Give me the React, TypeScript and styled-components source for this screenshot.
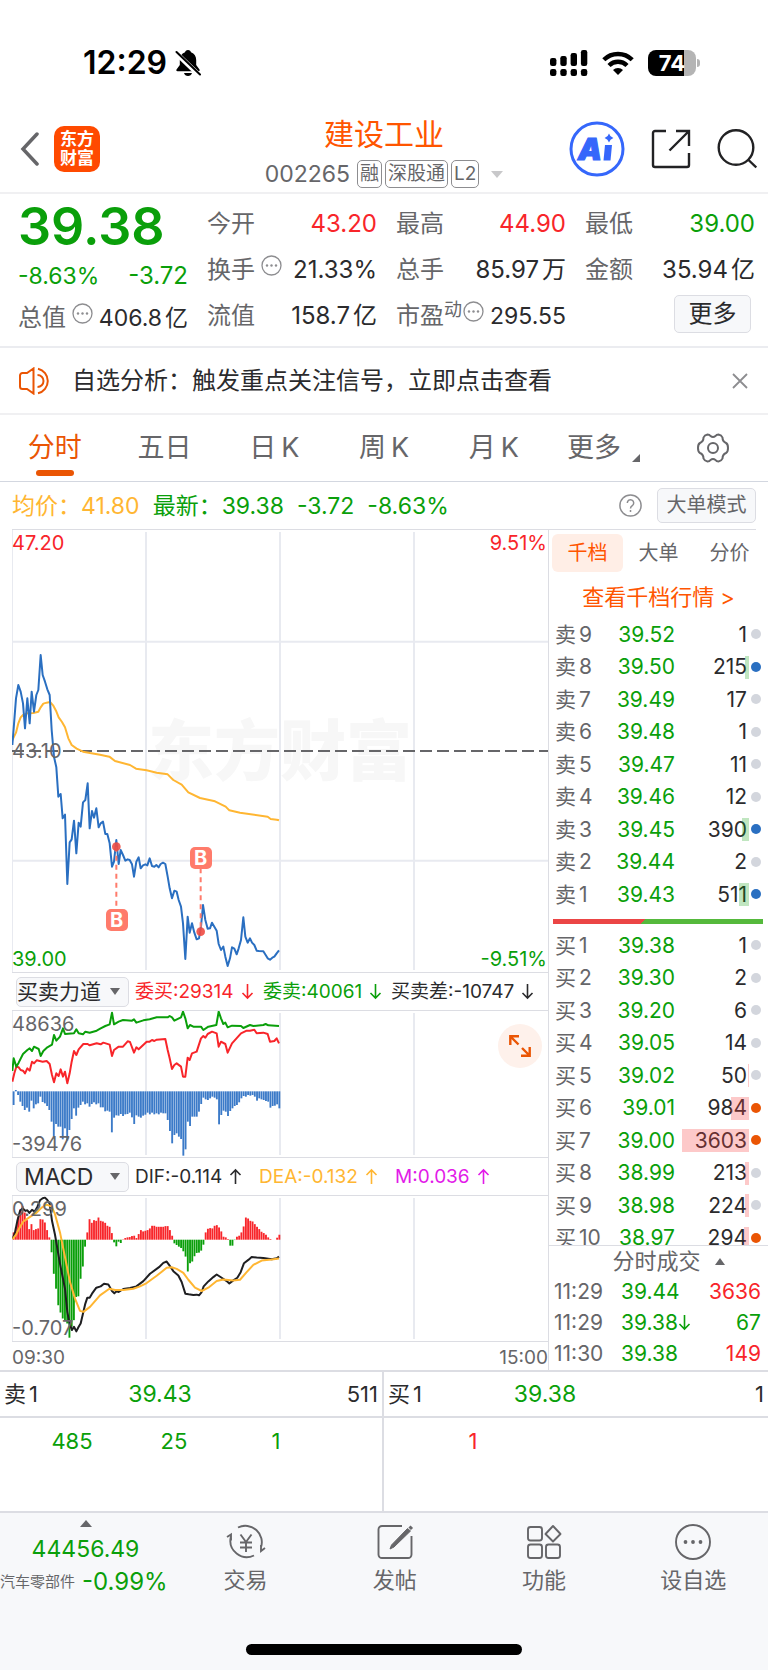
import React from "react";
import styled, { createGlobalStyle, css } from "styled-components";

const C = {
  green: "#0a9f0a",
  red: "#f8252a",
  orange: "#ff5500",
  tab: "#ea5504",
  amber: "#ffb632",
  magenta: "#e21be8",
  blue: "#2a6fc1",
  text: "#2b2b2d",
  grey: "#666669",
  line: "#dcdde3",
  grid: "#e8eaf0",
  soft: "#f7f8fa",
};

const GlobalStyle = createGlobalStyle`
  * { box-sizing: border-box; }
  body {
    margin: 0;
    background: #fff;
    color: ${C.text};
    font-family: Inter, "Noto Sans CJK SC", sans-serif;
    font-size: 22px;
    line-height: 32px;
  }
  button, select { font: inherit; color: inherit; margin: 0; padding: 0; border: 0; background: none; white-space: nowrap; }
  a { color: inherit; text-decoration: none; }
  svg { display: block; flex: none; }
`;

const Page = styled.main`
  min-height: 100vh;
  background: #fff;
  overflow-x: hidden;
`;

/* ---------- status bar ---------- */

const StatusBar = styled.div`
  display: flex;
  justify-content: space-between;
  align-items: center;
  padding: 19px 68px 0 83px;
  height: 106px;
  color: #000;
`;
const StatusSide = styled.div`
  display: flex;
  align-items: center;
  gap: 14px;
`;
const Clock = styled.div`
  display: flex;
  align-items: center;
  gap: 8px;
  font-size: 32px;
  font-weight: 600;
`;
const Battery = styled.span`
  display: flex;
  align-items: center;
  gap: 1px;
  &::after {
    content: "";
    width: 3px;
    height: 8px;
    border-radius: 0 3px 3px 0;
    background: #b4b4b4;
  }
`;
const BatteryBody = styled.span`
  width: 48px;
  height: 26px;
  line-height: 26px;
  border-radius: 8px;
  background: linear-gradient(90deg, #000 75%, #b4b4b4 75%);
  color: #fff;
  font-size: 22px;
  font-weight: 700;
  text-align: center;
`;

/* ---------- header ---------- */

const Header = styled.header`
  display: grid;
  grid-template-columns: 1fr auto 1fr;
  align-items: center;
  height: 88px;
  padding: 0 11px;
  border-bottom: 2px solid #f0f0f2;
`;
const HeaderSide = styled.div<{ $end?: boolean }>`
  display: flex;
  align-items: center;
  gap: ${(p) => (p.$end ? 26 : 15)}px;
  padding-left: ${(p) => (p.$end ? 0 : 9)}px;
  justify-content: ${(p) => (p.$end ? "flex-end" : "flex-start")};
`;
const Logo = styled.span`
  display: flex;
  align-items: center;
  justify-content: center;
  width: 46px;
  height: 46px;
  border-radius: 10px;
  background: #ff4a00;
  color: #fff;
  font-size: 17px;
  line-height: 19px;
  font-weight: 700;
  text-align: center;
`;
const TitleBlock = styled.div`
  display: flex;
  flex-direction: column;
  align-items: center;
  gap: 6px;
  padding-top: 4px;
`;
const Title = styled.h1`
  margin: 0;
  color: ${C.orange};
  font-size: 30px;
  line-height: 40px;
  font-weight: 400;
`;
const CodeRow = styled.div`
  display: flex;
  align-items: center;
  gap: 3px;
  color: ${C.grey};
  font-size: 23px;
  line-height: 28px;
`;
const Code = styled.span`
  margin-right: 4px;
`;
const Tag = styled.span`
  padding: 0 2px;
  border: 1px solid #8d8d90;
  border-radius: 5px;
  font-size: 19px;
  line-height: 26px;
`;
const Caret = styled.span<{ $up?: boolean; $light?: boolean; $small?: boolean }>`
  width: 0;
  height: 0;
  border: ${(p) => (p.$small ? 5 : 6)}px solid transparent;
  ${(p) =>
    p.$up
      ? css`border-top: 0; border-bottom: 7px solid ${C.grey};`
      : css`border-bottom: 0; border-top: 7px solid ${p.$light ? "#c8c8ca" : C.grey};`}
`;
const CodeCaret = styled(Caret)`
  margin-left: 9px;
`;

/* ---------- quote summary ---------- */

const Summary = styled.section`
  display: grid;
  grid-template-columns: repeat(4, 1fr);
  column-gap: 19px;
  padding: 7px 13px 7px 18px;
  border-bottom: 2px solid #ebecf0;
  font-size: 24px;
`;
const SummaryColumn = styled.dl`
  margin: 0;
`;
const Stat = styled.div<{ $height?: number }>`
  display: flex;
  align-items: center;
  justify-content: space-between;
  height: ${(p) => p.$height ?? 46}px;
  white-space: nowrap;
`;
const StatLabel = styled.dt`
  display: flex;
  align-items: center;
  gap: 6px;
  color: ${C.grey};
  svg { margin-bottom: 10px; }
`;
const StatValue = styled.dd<{ $color?: string; $compact?: boolean }>`
  display: flex;
  gap: 3px;
  margin: 0;
  color: ${(p) => p.$color ?? C.text};
  font-size: ${(p) => (p.$compact ? 23 : 24)}px;
`;
const Price = styled.dd`
  margin: 0;
  height: 54px;
  color: ${C.green};
  font-size: 52px;
  line-height: 52px;
  font-weight: 600;
`;
const Sup = styled.sup`
  margin: 0 -5px 12px -6px;
  font-size: 18px;
  line-height: 20px;
  vertical-align: baseline;
`;
const OutlineButton = styled.button<{ $w: number; $h: number; $size: number }>`
  width: ${(p) => p.$w}px;
  height: ${(p) => p.$h}px;
  border: 1px solid ${C.line};
  border-radius: 5px;
  background: ${C.soft};
  font-size: ${(p) => p.$size}px;
  line-height: ${(p) => p.$h - 2}px;
`;
const MoreCell = styled.div`
  display: flex;
  justify-content: flex-end;
  padding: 2px 4px 0 0;
`;

/* ---------- banner and period tabs ---------- */

const Banner = styled.section`
  display: flex;
  align-items: center;
  gap: 20px;
  height: 67px;
  padding: 0 20px 0 18px;
  border-bottom: 2px solid #f0f0f2;
  font-size: 24px;
`;
const BannerText = styled.a`
  flex: 1;
  white-space: nowrap;
`;
const PeriodTabs = styled.nav`
  display: grid;
  grid-template-columns: repeat(7, 1fr);
  height: 67px;
  border-bottom: 1px solid #d3d7e0;
`;
const PeriodTab = styled.button<{ $active?: boolean }>`
  display: flex;
  align-items: center;
  justify-content: center;
  gap: 5px;
  color: ${(p) => (p.$active ? C.tab : C.grey)};
  font-size: 27px;
  position: relative;
  ${(p) =>
    p.$active &&
    css`
      &::after {
        content: "";
        position: absolute;
        left: calc(50% - 19px);
        bottom: 5px;
        width: 38px;
        height: 6px;
        border-radius: 3px;
        background: ${C.tab};
      }
    `}
`;
const Corner = styled.span`
  align-self: flex-end;
  margin: 0 0 19px 6px;
  border-left: 8px solid transparent;
  border-bottom: 8px solid ${C.grey};
`;

/* ---------- legend ---------- */

const Legend = styled.div`
  display: flex;
  align-items: center;
  gap: 13px;
  height: 48px;
  margin: 0 12px;
  border-bottom: 1px solid ${C.line};
  white-space: nowrap;
`;
const LegendItem = styled.span<{ $color: string }>`
  color: ${(p) => p.$color};
  font-size: 23px;
`;
const LegendTools = styled.div`
  display: flex;
  align-items: center;
  gap: 15px;
  margin-left: auto;
  color: ${C.grey};
`;

/* ---------- charts ---------- */

const Board = styled.div`
  display: flex;
  border-bottom: 2px solid ${C.line};
`;
const Charts = styled.section`
  flex: 1;
  min-width: 0;
  margin-left: 12px;
`;
const ChartBox = styled.div<{ $h: number }>`
  position: relative;
  height: ${(p) => p.$h}px;
  box-shadow: inset 1px 0 ${C.grid};
  border-bottom: 1px solid ${C.line};
`;
const Plot = styled.svg`
  width: 100%;
  height: 100%;
  position: relative;
`;
const AxisLabel = styled.span<{ $color: string; $right?: boolean; $edge: "top" | "middle" | "bottom" }>`
  position: absolute;
  ${(p) => (p.$right ? "right: 1px;" : "left: 0;")}
  ${(p) => (p.$edge === "top" ? "top: 0;" : p.$edge === "bottom" ? "bottom: 0;" : "top: calc(50% - 13px);")}
  color: ${(p) => p.$color};
  font-size: 20px;
  line-height: 26px;
`;
const Watermark = styled.span`
  position: absolute;
  inset: 0;
  display: flex;
  align-items: center;
  justify-content: center;
  color: #f7f7f7;
  font-size: 66px;
  font-weight: 900;
`;
const Marker = styled.span<{ $x: number; $y: number }>`
  position: absolute;
  left: ${(p) => p.$x}%;
  top: ${(p) => p.$y}%;
  transform: translate(-50%, -50%);
  width: 22px;
  height: 22px;
  border-radius: 5px;
  background: #ff7b6b;
  color: #fff;
  font-size: 20px;
  line-height: 22px;
  font-weight: 700;
  text-align: center;
`;
const IndicatorRow = styled.div`
  display: flex;
  align-items: center;
  gap: 6px;
  height: 38px;
  padding-left: 4px;
  border-bottom: 1px solid ${C.line};
  white-space: nowrap;
  font-size: 19px;
`;
const SelectWrap = styled.span`
  position: relative;
  display: flex;
  align-items: center;
  width: 113px;
`;
const Select = styled.select<{ $indent: number; $size: number }>`
  appearance: none;
  width: 100%;
  height: 30px;
  padding-left: ${(p) => p.$indent}px;
  border: 1px solid ${C.line};
  border-radius: 5px;
  background: ${C.soft};
  font-size: ${(p) => p.$size}px;
  line-height: 28px;
`;
const SelectCaret = styled(Caret)`
  position: absolute;
  right: 9px;
  pointer-events: none;
`;
const Reading = styled.span<{ $color: string; $w?: number }>`
  display: flex;
  align-items: center;
  gap: 7px;
  min-width: ${(p) => p.$w ?? 0}px;
  color: ${(p) => p.$color};
`;
const ExpandButton = styled.button`
  position: absolute;
  right: 6px;
  top: 13px;
  display: flex;
  align-items: center;
  justify-content: center;
  width: 44px;
  height: 44px;
  border-radius: 50%;
  background: #fef1eb;
`;
const TimeAxis = styled.div`
  display: flex;
  justify-content: space-between;
  height: 28px;
  color: ${C.grey};
  font-size: 19px;
  line-height: 31px;
`;

/* ---------- order book ---------- */

const BookPanel = styled.aside`
  display: flex;
  flex-direction: column;
  width: 220px;
  border-left: 1px solid ${C.line};
`;
const BookTabs = styled.div`
  display: flex;
  padding: 4px 0 0 3px;
`;
const BookTab = styled.button<{ $active?: boolean }>`
  width: 71px;
  height: 38px;
  border-radius: 6px;
  color: ${(p) => (p.$active ? C.orange : C.grey)};
  background: ${(p) => (p.$active ? "#ffeee6" : "transparent")};
  font-size: 20px;
`;
const BookLink = styled.a`
  margin-top: 4px;
  height: 42px;
  color: ${C.orange};
  line-height: 42px;
  text-align: center;
`;
const BookTable = styled.table`
  width: 100%;
  table-layout: fixed;
  border-collapse: collapse;
  font-size: 21px;
  td, th { padding: 0; font-weight: 400; white-space: nowrap; }
`;
const BookRow = styled.tr`
  height: 32px;
  line-height: 32px;
  &:nth-child(odd) { height: 33px; }
`;
const LevelCell = styled.th`
  width: 50px;
  color: ${C.grey};
  text-align: left;
  && { padding-left: 6px; }
`;
const Rank = styled.span`
  margin-left: 3px;
`;
const PriceCell = styled.td`
  width: 76px;
  color: ${C.green};
  text-align: right;
`;
const VolumeCell = styled.td`
  position: relative;
  text-align: right;
  && { padding-right: 21px; }
`;
const VolumeBar = styled.span<{ $buy?: boolean }>`
  position: absolute;
  right: 19px;
  top: 5px;
  height: 23px;
  background: ${(p) => (p.$buy ? "rgba(248, 60, 60, .28)" : "rgba(10, 160, 10, .26)")};
`;
const Dot = styled.span<{ $color: string }>`
  position: absolute;
  right: 7px;
  top: 11px;
  width: 10px;
  height: 10px;
  border-radius: 50%;
  background: ${(p) => p.$color};
`;
const Ratio = styled.div`
  height: 5px;
  margin: 8px 5px 5px 4px;
  background: linear-gradient(135deg, #eb4545 0 43%, #55b93c 43%);
`;
const BuyClip = styled.div`
  height: 316px;
  overflow: hidden;
`;
const TradesHead = styled.button`
  display: flex;
  align-items: center;
  justify-content: center;
  gap: 14px;
  width: 100%;
  height: 31px;
  padding-left: 20px;
  border-top: 1px solid ${C.line};
  color: ${C.grey};
  line-height: 28px;
`;
const TradeRow = styled.tr`
  height: 31px;
  line-height: 31px;
`;
const TradeTime = styled.td`
  width: 66px;
  color: ${C.grey};
  && { padding-left: 5px; }
`;
const TradePrice = styled.td`
  width: 76px;
  color: ${C.green};
  && { padding-left: 6px; }
`;
const TradeVolume = styled.td<{ $color: string }>`
  color: ${(p) => p.$color};
  text-align: right;
  && { padding-right: 7px; }
`;
const Arrow = styled.svg`
  display: inline-block;
  vertical-align: -1px;
`;

/* ---------- best quotes ---------- */

const Quotes = styled.section`
  display: grid;
  grid-template-columns: 1fr 1fr;
`;
const QuoteSide = styled.div`
  &:first-child { border-right: 2px solid ${C.line}; }
`;
const QuoteHead = styled.div`
  display: grid;
  grid-template-columns: 1fr auto 1fr;
  align-items: center;
  height: 46px;
  padding: 0 4px;
  border-bottom: 2px solid ${C.line};
`;
const QuotePrice = styled.span`
  margin-right: 62px;
  color: ${C.green};
  font-size: 23px;
`;
const QuoteVolume = styled.span`
  text-align: right;
`;
const QuoteLots = styled.div<{ $indent: number; $color: string }>`
  display: flex;
  height: 93px;
  padding: 7px 0 0 ${(p) => p.$indent}px;
  color: ${(p) => p.$color};
  text-align: center;
`;
const Lot = styled.span`
  width: 102px;
`;

/* ---------- bottom bar ---------- */

const BottomBar = styled.footer`
  display: flex;
  flex-direction: column;
  justify-content: space-between;
  align-items: center;
  height: 160px;
  padding-bottom: 16px;
  border-top: 2px solid ${C.line};
  background: ${C.soft};
`;
const BottomNav = styled.nav`
  display: flex;
  width: 100%;
`;
const IndexCell = styled.a`
  display: flex;
  flex-direction: column;
  align-items: center;
  width: 171px;
  padding-top: 7px;
  color: ${C.green};
  font-size: 23px;
  white-space: nowrap;
`;
const IndexValue = styled.span`
  margin-top: 5px;
  line-height: 34px;
`;
const IndexName = styled.span`
  display: flex;
  align-items: center;
  gap: 7px;
  align-self: flex-start;
  font-size: 24px;
`;
const IndexLabel = styled.span`
  color: ${C.grey};
  font-size: 15px;
`;
const NavButton = styled.button`
  display: flex;
  flex: 1;
  flex-direction: column;
  align-items: center;
  gap: 3px;
  padding-top: 11px;
  color: ${C.grey};
`;
const HomeIndicator = styled.span`
  width: 276px;
  height: 11px;
  border-radius: 6px;
  background: #000;
`;

/* ---------- data ---------- */

const PRICE_LINE =
  "37,315 43,240 48,175 55,135 62,155 69,190 75,265 82,175 89,250 95,155 102,215 109,165 115,150 122,45 128,105 135,125 142,148 149,165 155,270 162,350 169,382 175,470 182,462 188,535 195,524 202,732 209,607 215,598 222,542 229,640 236,548 242,560 249,487 256,480 263,430 269,565 276,513 282,533 289,505 296,562 302,550 309,545 316,582 322,582 329,610 336,680 342,665 349,600 356,672 362,630 369,645 376,662 383,658 389,660 396,673 402,710 409,665 416,652 422,685 429,676 436,673 442,676 449,655 456,678 463,680 469,675 476,682 482,672 489,668 496,672 503,710 509,745 516,775 523,752 530,755 536,780 543,800 549,850 556,957 563,830 569,878 576,850 583,878 590,898 597,895 603,860 609,795 616,840 623,866 630,865 636,848 643,860 650,872 656,912 663,930 670,920 676,950 683,978 690,955 696,922 703,926 710,943 716,925 723,900 730,832 736,890 743,908 750,895 756,908 763,915 770,932 777,933 790,934 797,945 803,955 810,959 817,953 823,950 830,940 837,931";
const AVERAGE_LINE =
  "37,300 48,278 55,250 62,232 69,225 82,220 100,219 115,215 122,202 130,191 140,188 150,186 160,197 168,212 176,232 186,246 195,262 205,295 215,315 230,326 249,335 270,339 300,344 328,350 345,363 390,375 408,386 440,391 470,398 503,403 520,420 545,434 565,457 600,474 645,484 677,500 688,511 720,518 803,530 812,537 830,539 837,541";
const SELL_LINE =
  "37,303 41,265 49,290 56,278 69,252 82,240 89,235 96,243 102,230 116,237 122,258 130,243 142,232 156,224 162,195 169,212 180,200 189,175 195,192 222,190 229,178 236,190 249,193 256,185 269,188 290,182 302,175 316,168 329,163 336,128 342,163 356,155 369,150 396,152 402,148 409,158 430,151 449,148 470,142 503,142 509,138 516,142 523,152 543,142 549,125 556,145 563,175 570,165 580,170 603,170 610,180 625,170 649,165 656,125 663,145 670,162 676,158 683,172 696,167 723,168 730,174 750,165 760,168 790,165 797,162 805,166 837,168";
const BUY_LINE =
  "37,335 43,310 49,290 56,292 62,300 69,302 75,310 82,295 89,302 96,275 102,280 110,271 128,275 140,273 149,282 156,315 162,337 169,310 176,318 182,298 189,320 195,305 202,340 209,310 215,275 222,243 229,255 236,238 250,222 263,222 269,226 290,220 302,223 310,218 329,224 336,258 342,240 356,230 369,230 383,214 390,216 402,248 409,232 416,238 440,215 449,215 456,210 463,213 470,209 496,207 503,240 509,265 516,297 523,285 530,280 543,290 549,320 556,320 563,263 569,270 576,250 590,245 603,205 610,198 616,203 623,192 636,185 650,190 656,230 663,215 676,222 683,248 696,220 723,190 740,182 750,182 763,179 770,190 790,188 803,192 810,215 823,213 830,205 837,220";
const FORCE_BARS = [
  405, 360, 375, 395, 408, 420, 413, 425, 392, 415, 403, 400, 380, 396, 400, 408, 420, 455, 500, 462, 470, 470, 508, 475, 512, 480, 447, 415, 437, 413,
  405, 395, 403, 400, 410, 402, 397, 403, 400, 412, 412, 424, 422, 425, 487, 443, 436, 437, 432, 438, 433, 432, 428, 442, 462, 436, 440, 443, 437, 434,
  428, 433, 428, 433, 430, 433, 428, 430, 430, 450, 483, 520, 495, 490, 500, 507, 557, 538, 455, 468, 440, 440, 440, 425, 402, 383, 388, 390, 385, 380,
  383, 388, 463, 435, 422, 425, 438, 423, 415, 408, 405, 397, 385, 378, 380, 375, 377, 375, 380, 392, 385, 388, 390, 393, 395, 413, 408, 407, 403, 415,
];
const MACD_BARS = [
  215, 200, 170, 145, 135, 155, 178, 205, 190, 208, 205, 203, 175, 176, 185, 208, 230, 275, 340, 385, 435, 457, 475, 480, 490, 533, 500, 480, 410, 408,
  355, 318, 258, 215, 175, 186, 178, 180, 170, 180, 182, 186, 195, 198, 217, 245, 257, 243, 247, 236, 232, 230, 229, 226, 225, 232, 220, 208, 212, 210,
  208, 203, 195, 195, 198, 198, 198, 198, 196, 196, 208, 225, 248, 253, 258, 262, 272, 288, 333, 308, 303, 287, 277, 276, 270, 252, 215, 204, 202, 203,
  195, 193, 200, 212, 228, 230, 235, 255, 255, 238, 228, 225, 215, 197, 170, 173, 180, 182, 190, 198, 205, 213, 217, 222, 230, 235, 237, 237, 231, 222,
];
const DIF_LINE =
  "38,235 45,215 52,180 60,150 68,142 76,150 82,148 88,156 96,147 104,152 112,138 120,118 128,112 135,110 142,117 149,128 156,180 165,222 180,310 195,385 202,455 209,492 216,510 222,500 229,514 236,500 242,490 249,460 256,430 262,412 269,412 276,400 289,382 302,378 312,370 325,372 336,392 343,399 350,393 356,395 370,386 390,383 409,378 430,362 450,340 477,320 490,307 500,303 510,317 520,332 535,345 545,365 556,400 566,402 580,404 590,403 597,405 605,395 611,378 625,363 640,350 650,342 665,352 680,362 688,369 700,360 712,352 722,335 732,308 745,298 755,289 770,291 790,292 815,296 830,293 837,288";
const DEA_LINE =
  "38,235 48,222 58,202 70,182 90,168 110,155 125,140 140,131 155,137 165,160 180,215 195,290 210,365 225,415 240,452 250,455 270,440 300,405 328,385 345,389 370,389 400,385 420,378 440,368 470,346 500,322 515,320 530,325 550,337 565,358 585,382 605,392 625,382 650,362 670,357 700,360 720,358 740,335 760,313 785,300 815,297 837,294";

const DOT = { none: "#d3d6dd", sell: C.blue, buy: C.tab };
type Level = [name: string, price: string, volume: number, dot: keyof typeof DOT];
const SELLS: Level[] = [
  ["卖9", "39.52", 1, "none"],
  ["卖8", "39.50", 215, "sell"],
  ["卖7", "39.49", 17, "none"],
  ["卖6", "39.48", 1, "none"],
  ["卖5", "39.47", 11, "none"],
  ["卖4", "39.46", 12, "none"],
  ["卖3", "39.45", 390, "sell"],
  ["卖2", "39.44", 2, "none"],
  ["卖1", "39.43", 511, "sell"],
];
const BUYS: Level[] = [
  ["买1", "39.38", 1, "none"],
  ["买2", "39.30", 2, "none"],
  ["买3", "39.20", 6, "none"],
  ["买4", "39.05", 14, "none"],
  ["买5", "39.02", 50, "none"],
  ["买6", "39.01", 984, "buy"],
  ["买7", "39.00", 3603, "buy"],
  ["买8", "38.99", 213, "none"],
  ["买9", "38.98", 224, "none"],
  ["买10", "38.97", 294, "buy"],
];

/* ---------- pieces ---------- */

const Grid = ({ top, height }: { top: number; height: number }) => (
  <g stroke={C.grid} strokeWidth="2">
    {[438, 840, 1242].map((x) => (
      <line key={x} x1={x} x2={x} y1={top + 6} y2={top + height - 6} vectorEffect="non-scaling-stroke" />
    ))}
  </g>
);

const Line = ({ points, color }: { points: string; color: string }) => (
  <polyline points={points} fill="none" stroke={color} strokeWidth="2" strokeLinejoin="round" vectorEffect="non-scaling-stroke" />
);

const MoreDots = () => (
  <svg width="21" height="21" viewBox="0 0 21 21" fill="#8d8d90">
    <circle cx="10.5" cy="10.5" r="9.5" fill="none" stroke="#8d8d90" strokeWidth="1.3" />
    <circle cx="6" cy="10.5" r="1.2" />
    <circle cx="10.5" cy="10.5" r="1.2" />
    <circle cx="15" cy="10.5" r="1.2" />
  </svg>
);

const Trend = ({ up }: { up?: boolean }) => (
  <Arrow width="13" height="17" viewBox="0 0 13 17" fill="none" stroke="currentColor" strokeWidth="1.6">
    <path d={up ? "M6.500 16V2M1.500 7l5-5 5 5" : "M6.500 1v14M1.500 10l5 5 5-5"} />
  </Arrow>
);

const Amount = ({ value, unit, compact }: { value: string; unit: string; compact?: boolean }) => (
  <StatValue $compact={compact}>
    <span>{value}</span>
    <span>{unit}</span>
  </StatValue>
);

const BookRows = ({ levels, buy }: { levels: Level[]; buy?: boolean }) => (
  <BookTable>
    <tbody>
      {levels.map(([name, price, volume, dot]) => (
        <BookRow key={name}>
          <LevelCell scope="row">
            {name.slice(0, 1)}
            <Rank>{name.slice(1)}</Rank>
          </LevelCell>
          <PriceCell>{price}</PriceCell>
          <VolumeCell>
            {volume}
            <VolumeBar $buy={buy} style={{ width: Math.round((volume / 3603) * 67) }} />
            <Dot $color={DOT[dot]} />
          </VolumeCell>
        </BookRow>
      ))}
    </tbody>
  </BookTable>
);

const BookSection = () => (
  <BookPanel>
    <BookTabs>
      <BookTab $active>千档</BookTab>
      <BookTab>大单</BookTab>
      <BookTab>分价</BookTab>
    </BookTabs>
    <BookLink href="#depth">查看千档行情 &gt;</BookLink>
    <BookRows levels={SELLS} />
    <Ratio />
    <BuyClip>
      <BookRows levels={BUYS} buy />
    </BuyClip>
    <TradesHead>
      分时成交
      <Caret $up $small />
    </TradesHead>
    <BookTable>
      <tbody>
        <TradeRow>
          <TradeTime>11:29</TradeTime>
          <TradePrice>39.44</TradePrice>
          <TradeVolume $color={C.red}>3636</TradeVolume>
        </TradeRow>
        <TradeRow>
          <TradeTime>11:29</TradeTime>
          <TradePrice>
            39.38
            <Trend />
          </TradePrice>
          <TradeVolume $color={C.green}>67</TradeVolume>
        </TradeRow>
        <TradeRow>
          <TradeTime>11:30</TradeTime>
          <TradePrice>39.38</TradePrice>
          <TradeVolume $color={C.red}>149</TradeVolume>
        </TradeRow>
      </tbody>
    </BookTable>
  </BookPanel>
);

const ChartSection = () => (
  <Charts>
    <ChartBox $h={443}>
      <Watermark>东方财富</Watermark>
      <Plot viewBox="36 -330 1608 1326" preserveAspectRatio="none">
        <Grid top={-330} height={1326} />
        <g stroke={C.grid} strokeWidth="2">
          <line x1="36" x2="1644" y1="5" y2="5" vectorEffect="non-scaling-stroke" />
          <line x1="36" x2="1644" y1="662" y2="662" vectorEffect="non-scaling-stroke" />
        </g>
        <line x1="36" x2="1644" y1="333" y2="333" stroke={C.grey} strokeWidth="2" strokeDasharray="12 5" vectorEffect="non-scaling-stroke" />
        <Line points={AVERAGE_LINE} color={C.amber} />
        <Line points={PRICE_LINE} color={C.blue} />
        <g stroke="#ff7b6b" strokeWidth="2" strokeDasharray="5 4">
          <line x1="349" x2="349" y1="620" y2="808" vectorEffect="non-scaling-stroke" />
          <line x1="602" x2="602" y1="685" y2="875" vectorEffect="non-scaling-stroke" />
        </g>
        <g fill="#ee4b42" fillOpacity=".9">
          <circle cx="349" cy="620" r="13" />
          <circle cx="602" cy="875" r="13" />
        </g>
      </Plot>
      <Marker $x={19.5} $y={88.2}>B</Marker>
      <Marker $x={35.2} $y={74.2}>B</Marker>
      <AxisLabel $color={C.red} $edge="top">47.20</AxisLabel>
      <AxisLabel $color={C.red} $edge="top" $right>9.51%</AxisLabel>
      <AxisLabel $color={C.grey} $edge="middle">43.10</AxisLabel>
      <AxisLabel $color={C.green} $edge="bottom">39.00</AxisLabel>
      <AxisLabel $color={C.green} $edge="bottom" $right>-9.51%</AxisLabel>
    </ChartBox>

    <IndicatorRow>
      <SelectWrap>
        <Select $indent={0} $size={21} aria-label="副图指标一" defaultValue="买卖力道">
          <option>买卖力道</option>
        </Select>
        <SelectCaret $small />
      </SelectWrap>
      <Reading $color={C.red} $w={122}>委买:29314 <Trend /></Reading>
      <Reading $color={C.green} $w={122}>委卖:40061 <Trend /></Reading>
      <Reading $color={C.text}>买卖差:-10747 <Trend /></Reading>
    </IndicatorRow>
    <ChartBox $h={147}>
      <Plot viewBox="36 123 1608 438" preserveAspectRatio="none">
        <Grid top={123} height={438} />
        <g fill="#3b7ac8">
          {FORCE_BARS.map((y, i) => (
            <rect key={i} x={38 + i * 6.7} y={Math.min(364, y)} width="5.6" height={Math.abs(y - 364)} />
          ))}
        </g>
        <Line points={BUY_LINE} color={C.red} />
        <Line points={SELL_LINE} color={C.green} />
      </Plot>
      <AxisLabel $color={C.grey} $edge="top">48636</AxisLabel>
      <AxisLabel $color={C.grey} $edge="bottom">-39476</AxisLabel>
      <ExpandButton aria-label="全屏">
        <svg width="24" height="24" viewBox="0 0 24 24" fill="none" stroke={C.tab} strokeWidth="2.4">
          <path d="M2.300 11V2.300H11M2.500 2.500l8 8M21.700 13v8.700H13M21.500 21.500l-7.500-7.500" />
        </svg>
      </ExpandButton>
    </ChartBox>

    <IndicatorRow>
      <SelectWrap>
        <Select $indent={7} $size={23} aria-label="副图指标二" defaultValue="MACD">
          <option>MACD</option>
        </Select>
        <SelectCaret $small />
      </SelectWrap>
      <Reading $color={C.text} $w={118}>DIF:-0.114 <Trend up /></Reading>
      <Reading $color={C.amber} $w={130}>DEA:-0.132 <Trend up /></Reading>
      <Reading $color={C.magenta}>M:0.036 <Trend up /></Reading>
    </IndicatorRow>
    <ChartBox $h={146}>
      <Plot viewBox="36 105 1608 438" preserveAspectRatio="none">
        <Grid top={105} height={438} />
        {MACD_BARS.map((y, i) => (
          <rect key={i} x={38 + i * 6.7} y={Math.min(237, y)} width="5.6" height={Math.abs(y - 237)} fill={y < 237 ? C.red : C.green} />
        ))}
        <Line points={DIF_LINE} color="#1f1f21" />
        <Line points={DEA_LINE} color={C.amber} />
      </Plot>
      <AxisLabel $color={C.grey} $edge="top">0.299</AxisLabel>
      <AxisLabel $color={C.grey} $edge="bottom">-0.707</AxisLabel>
    </ChartBox>
    <TimeAxis>
      <span>09:30</span>
      <span>15:00</span>
    </TimeAxis>
  </Charts>
);

const NAV = [
  {
    label: "交易",
    icon: (
      <>
        <path d="M12 3.500A16.500 16.500 0 0 1 34.800 24M28 31.500A16.500 16.500 0 0 1 4.800 13M1 13l4-2.500v6M39 24l-4 3v-6" />
        <path d="M14.500 10.500l5.500 7.500 5.500-7.500M20 18v10M14 18.500h12M14 23.500h12" />
      </>
    ),
  },
  {
    label: "发帖",
    icon: (
      <>
        <path d="M27 2H7a3.500 3.500 0 0 0-3.500 3.500v25A3.500 3.500 0 0 0 7 34h26a3.500 3.500 0 0 0 3.500-3.500V12" />
        <path d="M32.500 4.500l3 2.500L19 23l-4 2 1.500-4z" fill="currentColor" strokeWidth="1" />
        <path d="M34.500 2.500l2.500 2.500" strokeWidth="3" />
      </>
    ),
  },
  {
    label: "功能",
    icon: (
      <>
        <rect x="4" y="3" width="14" height="13.500" rx="2.500" />
        <rect x="4" y="20.500" width="14" height="13.500" rx="2.500" />
        <rect x="22" y="20.500" width="14" height="13.500" rx="2.500" />
        <path d="M29 2l7.500 8-7.500 7.500L21.500 10z" strokeLinejoin="round" />
      </>
    ),
  },
  {
    label: "设自选",
    icon: (
      <>
        <circle cx="20" cy="18" r="17" />
        <g fill="currentColor" stroke="none">
          <circle cx="12.500" cy="18" r="1.900" />
          <circle cx="20" cy="18" r="1.900" />
          <circle cx="27.500" cy="18" r="1.900" />
        </g>
      </>
    ),
  },
];

export default function App() {
  return (
    <Page>
      <GlobalStyle />
      <StatusBar>
        <Clock>
          12:29
          <svg width="26" height="28" viewBox="0 0 26 28">
            <path d="M13 1c-1.700 0-2.800 1-3 2.300C6.500 4.600 4.800 7.500 4.800 11v5L1.500 20.500c-.5 1 0 1.700 1 1.700h21c1 0 1.500-.7 1-1.700L21.200 16v-5c0-3.500-1.700-6.400-5.200-7.700C15.800 2 14.700 1 13 1zM9 24h8c-.5 2-2 3-4 3s-3.500-1-4-3z" />
            <path d="M1.500 4.500L24.500 26.500" stroke="#fff" strokeWidth="5" />
            <path d="M1.500 3L25 25.500" stroke="#000" strokeWidth="2" strokeLinecap="round" />
          </svg>
        </Clock>
        <StatusSide>
          <svg width="38" height="26" viewBox="0 0 38 26">
            {[8, 6, 3, 0].map((y, i) => (
              <g key={y}>
                <rect x={i * 10.3} y={y} width="6.400" height={16 - y} rx="2.200" />
                <rect x={i * 10.3} y="19" width="6.400" height="7" rx="2.200" />
              </g>
            ))}
          </svg>
          <svg width="32" height="24" viewBox="0 0 32 24" fill="none" stroke="#000" strokeWidth="4.400">
            <path d="M1.800 8.800a20.300 20.300 0 0 1 28.400 0M7 14.500a12.800 12.800 0 0 1 18 0" />
            <path d="M16 24l-5-5a7 7 0 0 1 10 0z" fill="#000" stroke="none" />
          </svg>
          <Battery>
            <BatteryBody>74</BatteryBody>
          </Battery>
        </StatusSide>
      </StatusBar>

      <Header>
        <HeaderSide>
          <button aria-label="返回">
            <svg width="19" height="34" viewBox="0 0 19 34" fill="none" stroke={C.grey} strokeWidth="3.500" strokeLinecap="round">
              <path d="M17 2L3 17l14 15" />
            </svg>
          </button>
          <Logo>
            东方
            <br />
            财富
          </Logo>
        </HeaderSide>
        <TitleBlock>
          <Title>建设工业</Title>
          <CodeRow>
            <Code>002265</Code>
            <Tag>融</Tag>
            <Tag>深股通</Tag>
            <Tag>L2</Tag>
            <CodeCaret $light />
          </CodeRow>
        </TitleBlock>
        <HeaderSide $end>
          <button aria-label="Ai">
            <svg width="56" height="56" viewBox="0 0 56 56">
              <circle cx="28" cy="28" r="26" fill="none" stroke="#3567fb" strokeWidth="3" />
              <text x="9" y="39" fill="#3567fb" stroke="#3567fb" strokeWidth="1.200" fontFamily="Inter, sans-serif" fontSize="30" fontWeight="900" fontStyle="italic">
                A
              </text>
              <path d="M36 24h7l-1.500 15.500h-7z" fill="#3567fb" />
              <path d="M40 12.500q1 3.500 4.400 4.500-3.400 1-4.400 4.500-1-3.500-4.400-4.500 3.400-1 4.400-4.500z" fill="#3567fb" />
            </svg>
          </button>
          <button aria-label="分享">
            <svg width="40" height="40" viewBox="0 0 40 40" fill="none" stroke="#222224" strokeWidth="2.400">
              <path d="M15 2H4a2 2 0 0 0-2 2v32a2 2 0 0 0 2 2h32a2 2 0 0 0 2-2V24M25 2h13v15M37.500 2.500L18.500 21.500" />
            </svg>
          </button>
          <button aria-label="搜索">
            <svg width="40" height="40" viewBox="0 0 40 40" fill="none" stroke="#222224" strokeWidth="2.400">
              <circle cx="19" cy="18.500" r="17.300" />
              <path d="M31 30.500l8.300 8" />
            </svg>
          </button>
        </HeaderSide>
      </Header>

      <Summary>
        <SummaryColumn>
          <Price>39.38</Price>
          <Stat $height={42}>
            <StatValue $compact $color={C.green}>-8.63%</StatValue>
            <StatValue $color={C.green}>-3.72</StatValue>
          </Stat>
          <Stat $height={42}>
            <StatLabel>总值<MoreDots /></StatLabel>
            <Amount compact value="406.8" unit="亿" />
          </Stat>
        </SummaryColumn>
        <SummaryColumn>
          <Stat>
            <StatLabel>今开</StatLabel>
            <StatValue $color={C.red}>43.20</StatValue>
          </Stat>
          <Stat>
            <StatLabel>换手<MoreDots /></StatLabel>
            <StatValue>21.33%</StatValue>
          </Stat>
          <Stat>
            <StatLabel>流值</StatLabel>
            <Amount value="158.7" unit="亿" />
          </Stat>
        </SummaryColumn>
        <SummaryColumn>
          <Stat>
            <StatLabel>最高</StatLabel>
            <StatValue $color={C.red}>44.90</StatValue>
          </Stat>
          <Stat>
            <StatLabel>总手</StatLabel>
            <Amount value="85.97" unit="万" />
          </Stat>
          <Stat>
            <StatLabel>市盈<Sup>动</Sup><MoreDots /></StatLabel>
            <StatValue $compact>295.55</StatValue>
          </Stat>
        </SummaryColumn>
        <div>
          <SummaryColumn>
            <Stat>
              <StatLabel>最低</StatLabel>
              <StatValue $color={C.green}>39.00</StatValue>
            </Stat>
            <Stat>
              <StatLabel>金额</StatLabel>
              <Amount value="35.94" unit="亿" />
            </Stat>
          </SummaryColumn>
          <MoreCell>
            <OutlineButton $w={77} $h={38} $size={24}>更多</OutlineButton>
          </MoreCell>
        </div>
      </Summary>

      <Banner>
        <svg width="34" height="28" viewBox="0 0 34 28" fill="none" stroke={C.tab} strokeWidth="2">
          <path d="M15.500 1.500v25L9 22H4.500A2.500 2.500 0 0 1 2 19.500v-11A2.500 2.500 0 0 1 4.500 6H9zM19.500 8a6 6 0 0 1 0 12M20 1.800a12.500 12.500 0 0 1 0 24.400" />
        </svg>
        <BannerText href="#signal">自选分析：触发重点关注信号，立即点击查看</BannerText>
        <button aria-label="关闭">
          <svg width="16" height="16" viewBox="0 0 16 16" stroke="#8d8d90" strokeWidth="1.800">
            <path d="M1 1l14 14M15 1L1 15" />
          </svg>
        </button>
      </Banner>

      <PeriodTabs>
        <PeriodTab $active>分时</PeriodTab>
        <PeriodTab>五日</PeriodTab>
        <PeriodTab><span>日</span><span>K</span></PeriodTab>
        <PeriodTab><span>周</span><span>K</span></PeriodTab>
        <PeriodTab><span>月</span><span>K</span></PeriodTab>
        <PeriodTab>
          更多
          <Corner />
        </PeriodTab>
        <PeriodTab aria-label="设置">
          <svg width="32" height="32" viewBox="0 0 32 32" fill="none" stroke={C.grey} strokeWidth="2" strokeLinejoin="round">
            <path d="M10.500 2.500q2 0 3 1.500 2.500 2 5 0 1-1.500 3-1.500 3 .5 4 3 0 4 3.500 5.500 2 1 2 5t-2 5q-3.500 1.500-3.500 5.500-1 2.500-4 3-2 0-3-1.500-2.500-2-5 0-1 1.500-3 1.500-3-.5-4-3 0-4-3.500-5.500-2-1-2-5t2-5Q6.500 9.500 6.500 5.500q1-2.500 4-3z" />
            <circle cx="16" cy="16" r="5" />
          </svg>
        </PeriodTab>
      </PeriodTabs>

      <Legend>
        <LegendItem $color={C.amber}>均价：41.80</LegendItem>
        <LegendItem $color={C.green}>最新：39.38</LegendItem>
        <LegendItem $color={C.green}>-3.72</LegendItem>
        <LegendItem $color={C.green}>-8.63%</LegendItem>
        <LegendTools>
          <button aria-label="说明">
            <svg width="23" height="23" viewBox="0 0 23 23" fill="none" stroke="#8d8d90" strokeWidth="1.500">
              <circle cx="11.500" cy="11.500" r="10.600" />
              <path d="M8.300 9a3.200 3.200 0 1 1 5 2.600c-1.300.9-1.800 1.300-1.800 2.900M11.500 16v2" />
            </svg>
          </button>
          <OutlineButton $w={99} $h={35} $size={20}>大单模式</OutlineButton>
        </LegendTools>
      </Legend>

      <Board>
        <ChartSection />
        <BookSection />
      </Board>

      <Quotes>
        <QuoteSide>
          <QuoteHead>
            <span>卖<Rank>1</Rank></span>
            <QuotePrice>39.43</QuotePrice>
            <QuoteVolume>511</QuoteVolume>
          </QuoteHead>
          <QuoteLots $indent={21} $color={C.green}>
            <Lot>485</Lot>
            <Lot>25</Lot>
            <Lot>1</Lot>
          </QuoteLots>
        </QuoteSide>
        <QuoteSide>
          <QuoteHead>
            <span>买<Rank>1</Rank></span>
            <QuotePrice>39.38</QuotePrice>
            <QuoteVolume>1</QuoteVolume>
          </QuoteHead>
          <QuoteLots $indent={38} $color={C.red}>
            <Lot>1</Lot>
          </QuoteLots>
        </QuoteSide>
      </Quotes>

      <BottomBar>
        <BottomNav>
          <IndexCell href="#index">
            <Caret $up />
            <IndexValue>44456.49</IndexValue>
            <IndexName>
              <IndexLabel>汽车零部件</IndexLabel>
              -0.99%
            </IndexName>
          </IndexCell>
          {NAV.map(({ label, icon }) => (
            <NavButton key={label}>
              <svg width="40" height="37" viewBox="0 0 40 37" fill="none" stroke="currentColor" strokeWidth="1.900">
                {icon}
              </svg>
              {label}
            </NavButton>
          ))}
        </BottomNav>
        <HomeIndicator />
      </BottomBar>
    </Page>
  );
}
